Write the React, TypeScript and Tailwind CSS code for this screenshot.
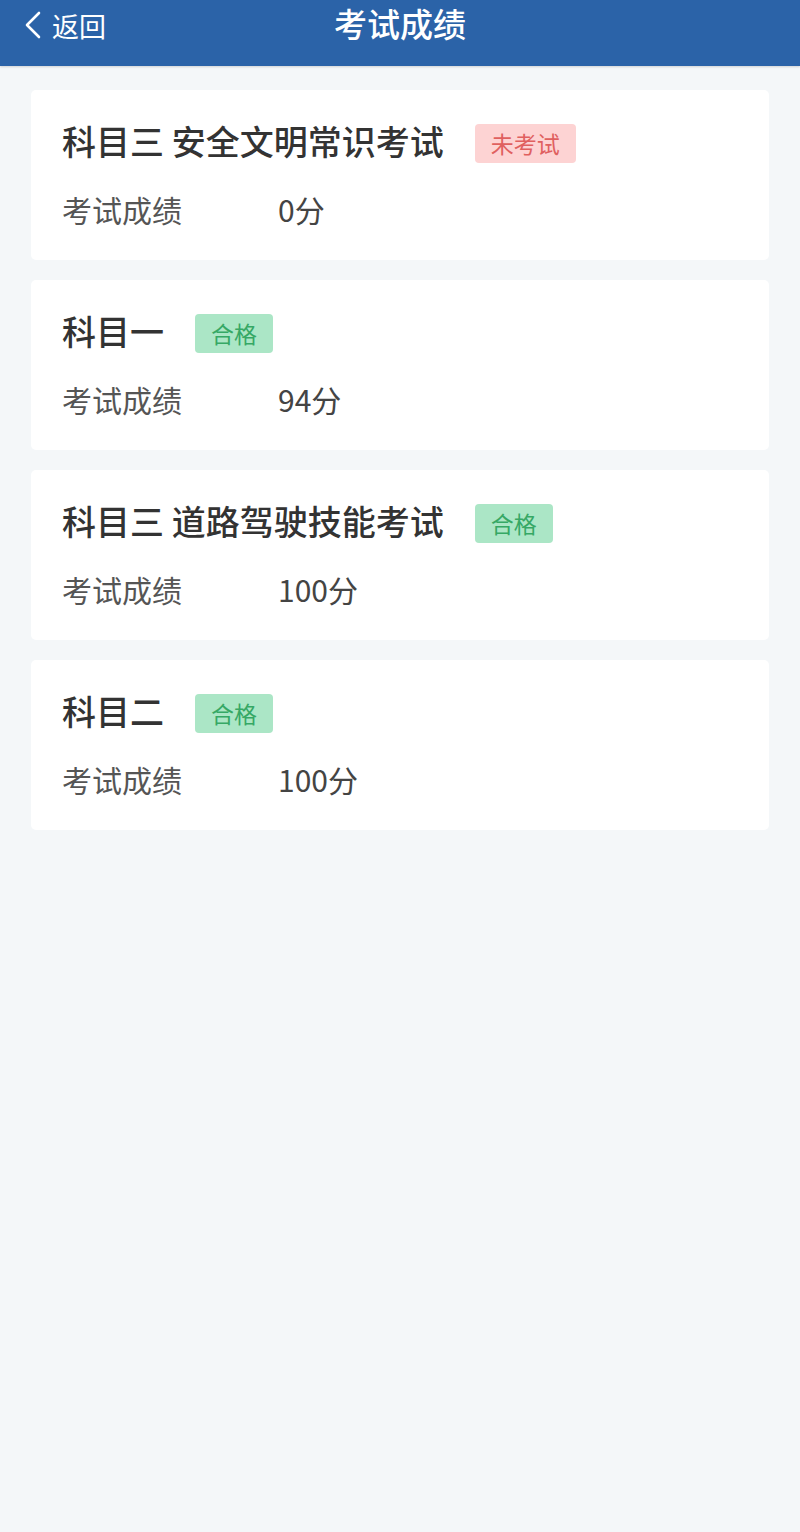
import React from 'react';

type Status = 'pass' | 'none';

interface Exam {
  name: string;
  status: Status;
  score: number;
}

const exams: Exam[] = [
  { name: '科目三 安全文明常识考试', status: 'none', score: 0 },
  { name: '科目一', status: 'pass', score: 94 },
  { name: '科目三 道路驾驶技能考试', status: 'pass', score: 100 },
  { name: '科目二', status: 'pass', score: 100 },
];

const font = { fontFamily: '"Noto Sans CJK SC", "Noto Sans", sans-serif' };

const Badge: React.FC<{ status: Status }> = ({ status }) =>
  status === 'pass' ? (
    <span className="ml-[31px] flex h-[39px] items-center rounded-[4px] bg-[#abe6c6] px-[16px] text-[23px] text-[#36a865]">
      合格
    </span>
  ) : (
    <span className="ml-[31px] flex h-[39px] items-center rounded-[4px] bg-[#fdd3d3] px-[16px] text-[23px] text-[#e0605f]">
      未考试
    </span>
  );

export default function App() {
  return (
    <div className="min-h-[1532px] bg-[#f4f7f9]" style={font}>
      {/* Header */}
      <header className="relative flex h-[66px] items-center justify-center bg-[#2b63a8] shadow-[0_1px_2px_rgba(0,0,0,0.15)]">
        <button className="absolute left-[22px] top-0 flex h-[50px] items-center gap-[10px] text-white">
          <svg width="20" height="30" viewBox="0 0 20 30" fill="none">
            <path d="M17 3 L5 15 L17 27" stroke="white" strokeWidth="2.6" strokeLinecap="round" strokeLinejoin="round" />
          </svg>
          <span className="text-[27px] leading-none">返回</span>
        </button>
        <h1 className="-mt-[20px] text-[33px] font-medium leading-none text-white">考试成绩</h1>
      </header>

      {/* List */}
      <main className="flex flex-col gap-[20px] px-[31px] pt-[24px]">
        {exams.map((exam, i) => (
          <div key={i} className="rounded-[5px] bg-white px-[31px] pb-[30px] pt-[33px]">
            <div className="flex h-[40px] items-center">
              <span className="-mt-[4px] text-[34px] font-medium leading-none text-[#333333]">{exam.name}</span>
              <Badge status={exam.status} />
            </div>
            <div className="mt-[27px] flex h-[40px] items-center text-[30px] leading-none">
              <span className="-mt-[2px] w-[216px] text-[#555555]">考试成绩</span>
              <span className="-mt-[2px] text-[#444444]">{exam.score}分</span>
            </div>
          </div>
        ))}
      </main>
    </div>
  );
}
